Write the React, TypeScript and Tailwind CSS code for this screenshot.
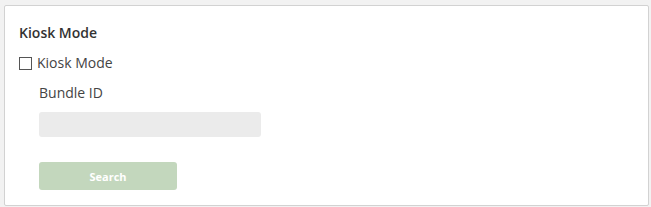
import React, { useState } from 'react';

export default function App() {
  const [kiosk, setKiosk] = useState(false);
  const [bundleId, setBundleId] = useState('');

  return (
    <div className="min-h-screen w-full bg-[#f2f2f2] pt-[5px] pl-[4px] pr-[2px] font-['Open_Sans',sans-serif]">
      <div className="h-[201px] border border-[#d2d2d2] bg-white rounded-[2px] pl-[14px] pt-[17px]">
        <h3 className="text-[14px] font-semibold text-[#333] leading-[20px]">Kiosk Mode</h3>
        <label className="mt-[10px] flex items-center gap-[5px] text-[14px] text-[#444] leading-[20px]">
          <input
            type="checkbox"
            checked={kiosk}
            onChange={(e) => setKiosk(e.target.checked)}
            className="appearance-none w-[13px] h-[13px] border border-[#555] bg-white m-0"
          />
          Kiosk Mode
        </label>
        <div className="pl-[20px]">
          <div className="mt-[10px] text-[14px] text-[#444] leading-[20px]">Bundle ID</div>
          <input
            value={bundleId}
            onChange={(e) => setBundleId(e.target.value)}
            className="mt-[9px] block w-[222px] h-[25px] rounded-[3px] bg-[#ebebeb] outline-none px-2 text-[12px]"
          />
          <button className="mt-[25px] w-[138px] h-[28px] rounded-[3px] bg-[#c3d7bd] text-white text-[11px] font-bold leading-[28px] pt-[1px]">
            Search
          </button>
        </div>
      </div>
    </div>
  );
}
